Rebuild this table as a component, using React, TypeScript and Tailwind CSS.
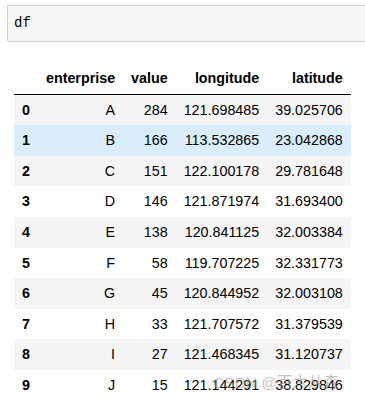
const rows = [
  ['0', 'A', '284', '121.698485', '39.025706'],
  ['1', 'B', '166', '113.532865', '23.042868'],
  ['2', 'C', '151', '122.100178', '29.781648'],
  ['3', 'D', '146', '121.871974', '31.693400'],
  ['4', 'E', '138', '120.841125', '32.003384'],
  ['5', 'F', '58', '119.707225', '32.331773'],
  ['6', 'G', '45', '120.844952', '32.003108'],
  ['7', 'H', '33', '121.707572', '31.379539'],
  ['8', 'I', '27', '121.468345', '31.120737'],
  ['9', 'J', '15', '121.144291', '38.829846'],
]

export default function App() {
  return (
    <div className="relative h-[399px] w-[365px] overflow-hidden bg-white text-black font-['Liberation_Sans',Arial,sans-serif]">
      <div className="ml-[7px] mt-[5px] flex h-[37px] items-center rounded-l-[2px] border border-r-0 border-[#cfcfcf] bg-[#f7f7f7] pl-[6px] font-['Liberation_Mono','Courier_New',monospace] text-[14px]">
        df
      </div>

      <table className="ml-[14px] mt-[21px] border-collapse text-[14.3px] leading-[14.6px]">
        <thead>
          <tr className="border-b border-black">
            <th className="px-2 py-2"></th>
            <th className="px-2 py-2 text-right font-bold">enterprise</th>
            <th className="px-2 py-2 text-right font-bold">value</th>
            <th className="px-2 py-2 text-right font-bold">longitude</th>
            <th className="px-2 py-2 text-right font-bold">latitude</th>
          </tr>
        </thead>
        <tbody>
          {rows.map((r, i) => (
            <tr
              key={r[0]}
              className={i === 1 ? 'bg-[#d9edfd]' : i % 2 === 0 ? 'bg-[#f5f5f5]' : 'bg-white'}
            >
              <th className="px-2 py-2 text-left font-bold">{r[0]}</th>
              <td className="px-2 py-2 text-right">{r[1]}</td>
              <td className="px-2 py-2 text-right">{r[2]}</td>
              <td className="px-2 py-2 text-right">{r[3]}</td>
              <td className="px-2 py-2 text-right">{r[4]}</td>
            </tr>
          ))}
        </tbody>
      </table>

      <div className="pointer-events-none absolute left-[213px] top-[374px] text-[15.5px] leading-[18px] text-[#9a9a9a]/60 font-['Liberation_Sans','Noto_Sans_CJK_SC',sans-serif]">
        CSDN @百木从森
      </div>
    </div>
  )
}
